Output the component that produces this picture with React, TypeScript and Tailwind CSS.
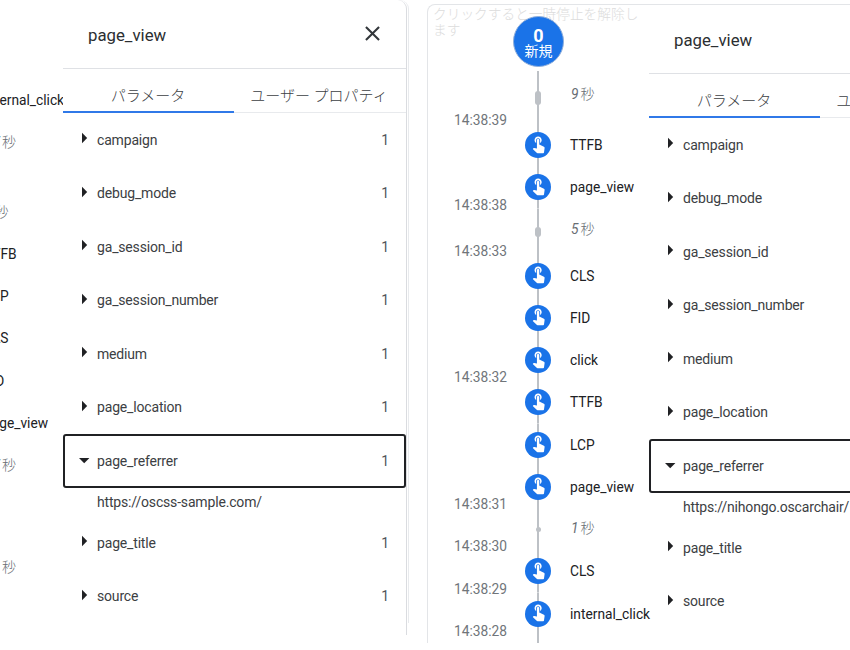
import { MdClose } from "react-icons/md";

const clippedLabels = [
  { label: "internal_click", size: "h-[42px]" },
  { label: "17 秒", gap: true, size: "h-[42px] mb-[28px]" },
  { label: "5 秒", gap: true, size: "h-[42px]" },
  { label: "TTFB", size: "h-[42px]" },
  { label: "LCP", size: "h-[42px]" },
  { label: "CLS", size: "h-[42px]" },
  { label: "FID", size: "h-[43px]" },
  { label: "page_view", size: "h-[42px]" },
  { label: "17 秒", gap: true, size: "h-[42px] mb-[60px]" },
  { label: "19 秒", gap: true, size: "h-[42px]" },
];

type TimelineRow = { label: string; size: string; time?: string; pill?: string; lift?: string };

const timeline: TimelineRow[] = [
  { label: "9 秒", size: "h-[53px]", time: "14:38:39", pill: "h-[14px] w-[6px]", lift: "pb-[8px]" },
  { label: "TTFB", size: "h-[42.25px]" },
  { label: "page_view", size: "h-[42.25px]", time: "14:38:38" },
  { label: "5 秒", size: "h-[46px]", time: "14:38:33", pill: "h-[10px] w-[6px]", lift: "pb-[5px]" },
  { label: "CLS", size: "h-[42.25px]" },
  { label: "FID", size: "h-[42.25px]" },
  { label: "click", size: "h-[42.25px]", time: "14:38:32" },
  { label: "TTFB", size: "h-[42.25px]" },
  { label: "LCP", size: "h-[42.25px]" },
  { label: "page_view", size: "h-[42.25px]", time: "14:38:31" },
  { label: "1 秒", size: "h-[42.25px]", time: "14:38:30", pill: "size-[5px]", lift: "pb-[2px]" },
  { label: "CLS", size: "h-[42.25px]", time: "14:38:29" },
  { label: "internal_click", size: "h-[42.25px]", time: "14:38:28" },
];

const params = [
  "campaign",
  "debug_mode",
  "ga_session_id",
  "ga_session_number",
  "medium",
  "page_location",
  "page_referrer",
  "page_title",
  "source",
];

function TouchIcon() {
  return (
    <svg viewBox="0 2.3 24 24" className="size-[19px] fill-white">
      <path d="M9 11.24V7.5C9 6.12 10.12 5 11.5 5S14 6.12 14 7.5v3.74c1.21-.81 2-2.18 2-3.74C16 5.01 13.99 3 11.5 3S7 5.01 7 7.5c0 1.56.79 2.93 2 3.74zm9.84 4.63l-4.54-2.26c-.17-.07-.35-.11-.54-.11H13v-6c0-.83-.67-1.5-1.5-1.5S10 6.67 10 7.5v10.74l-3.43-.72c-.08-.01-.15-.03-.24-.03-.31 0-.59.13-.79.33l-.79.8 4.94 4.94c.27.27.65.44 1.06.44h6.79c.75 0 1.33-.55 1.44-1.28l.75-5.27c.01-.07.02-.14.02-.2 0-.62-.38-1.16-.91-1.38z" />
    </svg>
  );
}

function Caret({ open }: { open: boolean }) {
  return (
    <svg viewBox="0 0 12 12" className="mr-[7px] mb-[3px] size-[12px] fill-[#202124]">
      <path d={open ? "M1 4h10.4L6.2 9.2z" : "M4 .8v10.4L9.2 6z"} />
    </svg>
  );
}

function GapLabel({ text }: { text: string }) {
  const [num, unit] = text.split(" ");
  return (
    <span className="flex items-center gap-[2px] pl-[1px] text-[#686d73]">
      <i>{num}</i>
      <span className="text-[14px] font-light">{unit}</span>
    </span>
  );
}

function DetailPanel({ url, counts }: { url: string; counts: boolean }) {
  return (
    <div className="w-[343px] shrink-0 text-[14px] tracking-[-0.17px] text-[#3c4043]">
      <div className="flex h-[69px] items-center justify-between border-b border-[#dfe1e5] pr-[21px] pl-[25px]">
        <h2 className="pt-[2px] text-[16.8px] tracking-normal text-[#2b2e31]">page_view</h2>
        {counts && <MdClose className="-mt-[1px] size-[25px] text-[#33373b]" />}
      </div>
      <div className="flex h-[44px] border-b border-[#e8eaed] text-[15px] font-light tracking-normal whitespace-nowrap">
        <div className="flex h-[44px] w-[171px] items-center justify-center border-b-2 border-[#3079e8] pt-[11px] pr-[1px]">パラメータ</div>
        <div className="flex h-[44px] w-[172px] items-center justify-center pt-[9px] pr-[2px]">ユーザー プロパティ</div>
      </div>
      {params.map((name) => {
        const open = name === "page_referrer";
        return (
          <div key={name}>
            <div
              className={
                open
                  ? "flex h-[54px] items-center rounded-[3px] border-2 border-[#202124] pr-[15px] pl-[13px]"
                  : "flex h-[53.5px] items-center pr-[17px] pl-[15px]"
              }
            >
              <Caret open={open} />
              <span className="flex-1">{name}</span>
              {counts && <span className="text-[#50545a]">1</span>}
            </div>
            {open && <div className="flex h-[28px] items-center pl-[34px] whitespace-nowrap">{url}</div>}
          </div>
        );
      })}
    </div>
  );
}

export default function App() {
  return (
    <div className="flex h-[650px] w-[850px] overflow-hidden bg-white font-['Roboto','Noto_Sans_CJK_JP',sans-serif] text-[13.75px] leading-[20px] text-[#202124]">
      <section className="flex h-[623px] w-[409px] shrink-0 rounded-tr-[9px] border-r border-[#e8eaed]">
        <div className="flex h-[635px] w-[407px] shrink-0 rounded-tr-[9px] border-r border-[#dadce0]">
          <div className="w-[63px] shrink-0 overflow-hidden pt-[79px]">
            <div className="-ml-[16px] whitespace-nowrap">
              {clippedLabels.map((row, i) => (
                <div key={i} className={`flex items-center ${row.size}`}>
                  {row.gap ? <GapLabel text={row.label} /> : row.label}
                </div>
              ))}
            </div>
          </div>
          <DetailPanel url="https://oscss-sample.com/" counts />
        </div>
      </section>

      <section className="relative ml-[18px] mt-[4px] flex h-[639px] w-[440px] shrink-0 rounded-tl-[8px] border-t border-l border-[#e3e5e8]">
        <div className="w-[221px] shrink-0">
          <p className="h-[66px] w-[221px] pt-[1px] pl-[5px] text-[13.7px] leading-[16px] font-light text-[#dcdcdc]">
            クリックすると一時停止を解除し<br />ます
          </p>
          <div className="absolute top-[11px] left-[85px] flex size-[51px] flex-col items-center justify-center rounded-full border border-[#8eaedb] bg-[#1a73e8] pt-[3px] text-white">
            <b className="text-[18px] leading-[17px] font-bold">0</b>
            <span className="text-[14px] leading-[15px]">新規</span>
          </div>
          {timeline.map((row, i) => (
            <div key={i} className={`flex ${row.size}`}>
              <div className="flex w-[97px] items-end pl-[26px] leading-[8px] text-[#70757a]">{row.time}</div>
              <div className="grid w-[26px] shrink-0 place-items-center bg-[linear-gradient(#bdc1c6,#bdc1c6)] bg-[length:2px_100%] bg-center bg-no-repeat">
                {row.pill ? (
                  <span className={`rounded-full bg-[#bdc1c6] ${row.pill}`} />
                ) : (
                  <span className="grid size-[26px] place-items-center rounded-full bg-[#1a73e8]">
                    <TouchIcon />
                  </span>
                )}
              </div>
              <div className={`flex w-[98px] items-center pl-[19px] whitespace-nowrap ${row.lift ?? ""}`}>
                {row.pill ? <GapLabel text={row.label} /> : row.label}
              </div>
            </div>
          ))}
          <div className="ml-[109px] h-[8px] w-[2px] bg-[#bdc1c6]" />
        </div>
        <div className="w-[202px] shrink-0 overflow-hidden">
          <DetailPanel url="https://nihongo.oscarchair/" counts={false} />
        </div>
      </section>
    </div>
  );
}
